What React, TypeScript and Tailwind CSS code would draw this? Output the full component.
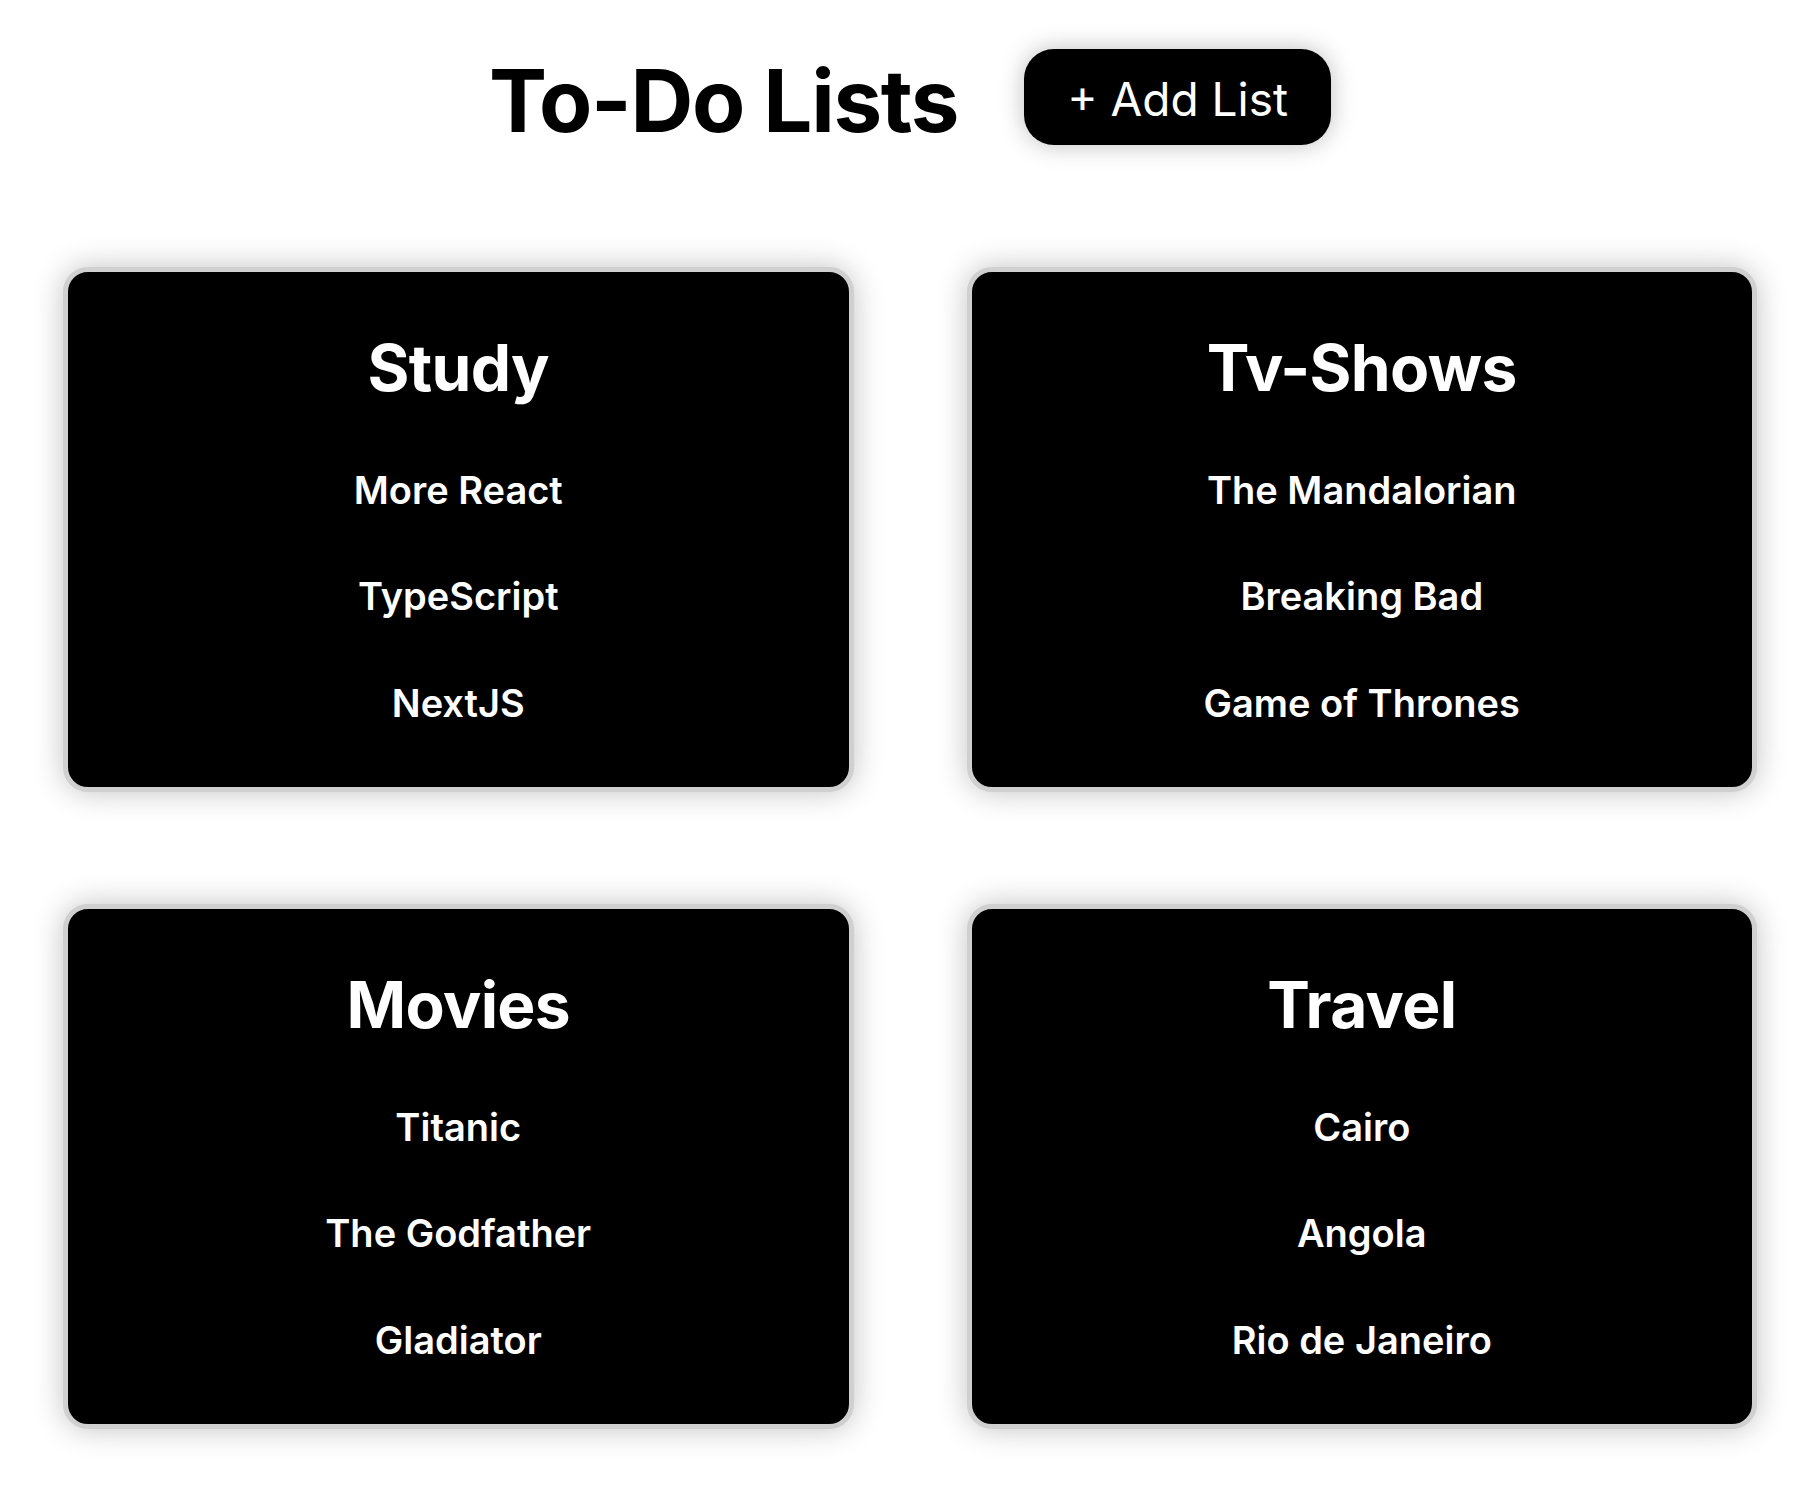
import React from "react";

const lists = [
  { title: "Study", items: ["More React", "TypeScript", "NextJS"] },
  { title: "Tv-Shows", items: ["The Mandalorian", "Breaking Bad", "Game of Thrones"] },
  { title: "Movies", items: ["Titanic", "The Godfather", "Gladiator"] },
  { title: "Travel", items: ["Cairo", "Angola", "Rio de Janeiro"] },
];

function Card({ title, items }: { title: string; items: string[] }) {
  return (
    <div className="h-[525px] rounded-[25px] border-[5px] border-[#d0d0d0] bg-black shadow-[0_0_30px_rgba(0,0,0,0.24)] pt-[64px] flex flex-col items-center text-white">
      <h2 className="text-[64px] leading-[64px] font-bold tracking-[-0.01em]">{title}</h2>
      <ul className="mt-[37px] flex flex-col items-center">
        {items.map((it) => (
          <li key={it} className="h-[106.25px] flex items-center leading-[38px] text-[38px] font-semibold">
            {it}
          </li>
        ))}
      </ul>
    </div>
  );
}

export default function App() {
  return (
    <div className="min-h-[1488px] bg-white font-['Inter',sans-serif] text-black">
      <header className="flex justify-center items-start gap-[66px] pt-[49px] pl-[6px]">
        <h1 className="mt-[8px] text-[87px] leading-[87px] font-bold tracking-[-0.015em]">To-Do Lists</h1>
        <button className="h-[96px] rounded-[30px] bg-black px-[43px] pt-[27px] pb-[23px] text-[46px] leading-[46px] font-normal text-white shadow-[0_0_24px_rgba(0,0,0,0.26)]">
          + Add List
        </button>
      </header>
      <main className="grid grid-cols-2 gap-x-[113px] gap-y-[112px] pl-[63px] pr-[57px] pt-[122px] pb-[59px]">
        {lists.map((l) => (
          <Card key={l.title} title={l.title} items={l.items} />
        ))}
      </main>
    </div>
  );
}
